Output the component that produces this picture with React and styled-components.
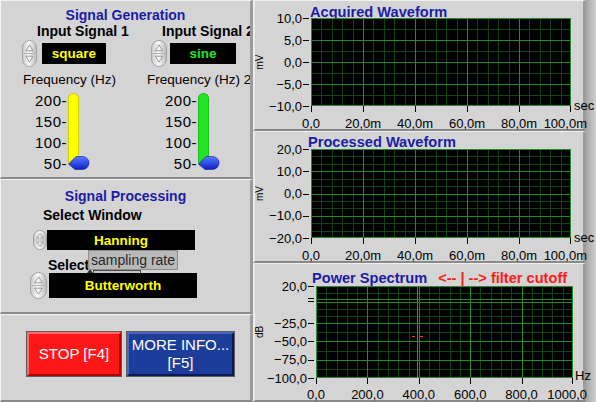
import React from 'react'
import styled, { createGlobalStyle } from 'styled-components'

const FONT = '"Liberation Sans", Arial, sans-serif'
const PANEL = '#d4d4d4'
const TITLE_BLUE = '#1c1ca8'
const MAJOR = '#238a26'
const MINOR = '#0a4412'
const CURSOR = '#ff3a14'

const GlobalStyle = createGlobalStyle`
  html, body {
    margin: 0;
    padding: 0;
    background: ${PANEL};
  }
  body {
    font-family: ${FONT};
  }
`

const Screen = styled.div`
  display: flex;
  width: 596px;
  height: 402px;
  overflow: hidden;
  background: ${PANEL};
  color: #000;
`

/* ---------- left controls ---------- */

const LeftColumn = styled.div`
  display: flex;
  flex-direction: column;
  width: 253px;
  flex-shrink: 0;
`

const Section = styled.div`
  position: relative;
  box-sizing: border-box;
  height: ${p => p.$h}px;
  padding-top: ${p => p.$pt}px;
  border-top: 1px solid #f4f4f4;
  border-left: 1px solid #f4f4f4;
  border-right: 3px solid #9c9c9c;
  border-bottom: 2px solid #8a8a8a;
  overflow: hidden;
`

const SectionTitle = styled.div`
  font-size: 14px;
  font-weight: bold;
  line-height: 16px;
  color: ${TITLE_BLUE};
  text-align: center;
`

const Columns = styled.div`
  display: flex;
`

const Column = styled.div`
  display: flex;
  flex-direction: column;
  align-items: flex-start;
  flex-shrink: 0;
  width: ${p => p.$w}px;
  margin-left: ${p => p.$ml || 0}px;
`

const ControlLabel = styled.div`
  font-size: 14px;
  font-weight: bold;
  line-height: 16px;
  white-space: nowrap;
  margin-left: ${p => p.$ml}px;
  margin-top: ${p => p.$mt || 0}px;
`

const FreqLabel = styled.div`
  font-size: 13.5px;
  line-height: 16px;
  white-space: nowrap;
  margin: 5px 0 0 ${p => p.$ml}px;
`

const Ring = styled.div`
  position: relative;
  z-index: 1;
  display: flex;
  align-items: center;
  gap: ${p => p.$gap}px;
  margin-left: ${p => p.$ml}px;
  margin-top: ${p => p.$mt || 0}px;
`

const Display = styled.div`
  display: flex;
  align-items: center;
  justify-content: center;
  width: ${p => p.$w}px;
  height: ${p => p.$h}px;
  background: #000;
  color: ${p => p.$color || '#ffff00'};
  font-size: 13.5px;
  font-weight: bold;
`

const SliderRow = styled.div`
  display: flex;
  gap: 1px;
  margin-top: 2px;
`

const Scale = styled.div`
  display: flex;
  flex-direction: column;
  align-items: flex-end;
  width: ${p => p.$w}px;
`

const ScaleTick = styled.div`
  height: 21px;
  line-height: 21px;
  font-size: 15px;
  letter-spacing: 0.5px;
`

const Track = styled.div`
  position: relative;
  width: 11px;
  height: 74px;
  margin-top: 3px;
  border-radius: 6px;
  background: ${p => p.$color};
  box-shadow: inset 0 0 0 1px rgba(0, 0, 0, 0.18);
`

const Thumb = styled.svg`
  position: absolute;
  left: 0;
  top: 63px;
  overflow: visible;
`

const Tooltip = styled.div`
  position: absolute;
  left: 87px;
  top: 70px;
  z-index: 2;
  box-sizing: border-box;
  height: 20px;
  padding: 0 2px;
  background: #b9b9b9;
  border: 1px solid #8e8e8e;
  font-size: 14px;
  line-height: 18px;
  color: #2a2a2a;
  white-space: nowrap;
`

const HiddenControl = styled.div`
  position: absolute;
  left: 92px;
  top: 90px;
  width: 48px;
  height: 10px;
  box-sizing: border-box;
  border: 1px solid #4a4a4a;
  background: #c4c4c4;

  &::before {
    content: '';
    position: absolute;
    left: -7px;
    top: -2px;
    border-left: 3px solid transparent;
    border-right: 3px solid transparent;
    border-bottom: 4px solid #333;
  }
`

const ButtonRow = styled.div`
  display: flex;
  gap: 6px;
  margin-left: 26px;
`

const Button = styled.div`
  display: flex;
  align-items: center;
  justify-content: center;
  box-sizing: border-box;
  width: ${p => p.$w}px;
  height: 44px;
  background: ${p => p.$bg};
  border: 2px solid;
  border-color: ${p => p.$light} ${p => p.$dark} ${p => p.$dark} ${p => p.$light};
  box-shadow: 0 0 0 1px #5e5e5e;
  color: #fff;
  font-size: 15px;
  line-height: 18px;
  text-align: center;
`

/* ---------- right graphs ---------- */

const RightColumn = styled.div`
  position: relative;
  z-index: 1;
  display: flex;
  flex-direction: column;
  width: 333px;
  flex-shrink: 0;
`

const GraphPanel = styled.div`
  display: flex;
  flex-direction: column;
  box-sizing: border-box;
  height: ${p => p.$h}px;
  border-top: 1px solid #f0f0f0;
  border-left: 2px solid #ececec;
  border-right: 3px solid #9c9c9c;
  border-bottom: 2px solid #8a8a8a;
`

const GraphTitle = styled.div`
  box-sizing: border-box;
  height: ${p => p.$h}px;
  padding: ${p => p.$pt}px 0 0 ${p => p.$pl}px;
  font-size: 14.6px;
  font-weight: bold;
  line-height: 16px;
  color: ${TITLE_BLUE};
  white-space: nowrap;
`

const CutoffHint = styled.span`
  margin-left: 11px;
  color: #ff1a1a;
`

const ChartSvg = styled.svg`
  display: block;
  flex-shrink: 0;
  overflow: visible;
  font-family: ${FONT};
`

const Edge = styled.div`
  flex: 1;
  background: linear-gradient(to right, #a6a6a6, #cfcfcf);
`

const Spinner = ({ w, h }) => (
  <svg width={w} height={h} viewBox={`0 0 ${w} ${h}`}>
    <defs>
      <linearGradient id="spinFill" x1="0" x2="1" y1="0" y2="0">
        <stop offset="0" stopColor="#c6c6c6" />
        <stop offset="0.45" stopColor="#fbfbfb" />
        <stop offset="1" stopColor="#b8b8b8" />
      </linearGradient>
    </defs>
    <rect x="0.5" y="0.5" width={w - 1} height={h - 1} rx={w / 2 - 0.5} fill="url(#spinFill)" stroke="#a4a4a4" />
    <line x1="2" x2={w - 2} y1={h / 2} y2={h / 2} stroke="#b4b4b4" />
    <path d={`M${w / 2} ${h * 0.18} L${w * 0.74} ${h * 0.4} H${w * 0.26} Z`} fill="none" stroke="#9a9a9a" />
    <path d={`M${w / 2} ${h * 0.82} L${w * 0.74} ${h * 0.6} H${w * 0.26} Z`} fill="none" stroke="#9a9a9a" />
  </svg>
)

const Slider = ({ scaleWidth, color }) => (
  <SliderRow>
    <Scale $w={scaleWidth}>
      {['200-', '150-', '100-', '50-'].map(t => (
        <ScaleTick key={t}>{t}</ScaleTick>
      ))}
    </Scale>
    <Track $color={color}>
      <Thumb width="21" height="14" viewBox="0 0 21 14">
        <defs>
          <linearGradient id="thumbFill" x1="0" y1="0" x2="0" y2="1">
            <stop offset="0" stopColor="#5c7cff" />
            <stop offset="1" stopColor="#0a1fc4" />
          </linearGradient>
        </defs>
        <path d="M0.5 8 L8 0.5 H14.5 A6.5 6.5 0 0 1 14.5 13.5 H7 Z" fill="url(#thumbFill)" stroke="#0a1a9a" strokeWidth="0.6" />
      </Thumb>
    </Track>
  </SliderRow>
)

const crisp = v => Math.round(v) + 0.5

const Chart = ({ height, plotX, plotW, plotH, yTicks, yMinor, extraMajor = [], xLabels, xBase, yUnit, xUnit, xUnitX, xUnitBase, children }) => {
  const divs = (xLabels.length - 1) * 5
  const clampY = y => Math.min(crisp(y), plotH - 0.5)
  const clampX = x => Math.min(crisp(x), plotX + plotW - 0.5)
  const verticals = []
  for (let i = 0; i <= divs; i++) {
    const x = clampX(plotX + (i * plotW) / divs)
    verticals.push(<line key={`v${i}`} x1={x} x2={x} y1={0} y2={plotH} stroke={i % 5 === 0 ? MAJOR : MINOR} />)
  }
  const majors = [...yTicks.map(t => t[1]), ...extraMajor]
  const last = xLabels.length - 1
  return (
    <ChartSvg width="328" height={height}>
      <rect x={plotX} y={0} width={plotW} height={plotH} fill="#000" />
      {yMinor.map(y => (
        <line key={`m${y}`} x1={plotX} x2={plotX + plotW} y1={clampY(y)} y2={clampY(y)} stroke={MINOR} />
      ))}
      {verticals}
      {majors.map(y => (
        <line key={`M${y}`} x1={plotX} x2={plotX + plotW} y1={clampY(y)} y2={clampY(y)} stroke={MAJOR} />
      ))}
      {yTicks.map(([label, y]) => (
        <g key={label}>
          <text x={plotX - 9} y={y + 4.5} textAnchor="end" fontSize="13">{label}</text>
          <line x1={plotX - 8} x2={plotX - 2} y1={crisp(y)} y2={crisp(y)} stroke="#000" />
        </g>
      ))}
      {xLabels.map((label, i) => {
        const x = plotX + (i * plotW) / last
        return (
          <g key={label}>
            <line x1={clampX(x)} x2={clampX(x)} y1={plotH} y2={plotH + 6} stroke="#000" />
            <text x={i === last ? 332 : x} y={xBase} textAnchor={i === last ? 'end' : 'middle'} fontSize="13">{label}</text>
          </g>
        )
      })}
      <text transform={`translate(8 ${plotH / 2}) rotate(-90)`} textAnchor="middle" fontSize="10">{yUnit}</text>
      <text x={xUnitX} y={xUnitBase} fontSize="13">{xUnit}</text>
      {children}
    </ChartSvg>
  )
}

const between = (ticks, n) => {
  const out = []
  for (let i = 0; i < ticks.length - 1; i++) {
    const a = ticks[i][1]
    const b = ticks[i + 1][1]
    for (let k = 1; k <= n; k++) out.push(a + ((b - a) * k) / (n + 1))
  }
  return out
}

const timeLabels = ['0,0', '20,0m', '40,0m', '60,0m', '80,0m', '100,0m']

const acquiredTicks = [['10,0', 0], ['5,0', 22], ['0,0', 44], ['\u22125,0', 66], ['\u221210,0', 88]]
const processedTicks = [['20,0', 0], ['10,0', 22.25], ['0,0', 44.5], ['\u221210,0', 66.75], ['\u221220,0', 89]]
const spectrumTicks = [['20,0', 0], ['\u221225,0', 37], ['\u221250,0', 55.3], ['\u221275,0', 73.7], ['\u2212100,0', 92]]

const App = () => (
  <Screen>
    <GlobalStyle />
    <LeftColumn>
      <Section $h={179} $pt={6}>
        <SectionTitle>Signal Generation</SectionTitle>
        <Columns>
          <Column $w={125} $ml={21}>
            <ControlLabel $ml={15}>Input Signal 1</ControlLabel>
            <Ring $ml={0} $mt={1} $gap={5}>
              <Spinner w={15} h={27} />
              <Display $w={64} $h={21} $color="#ffff00">square</Display>
            </Ring>
            <FreqLabel $ml={1}>Frequency (Hz)</FreqLabel>
            <Slider scaleWidth={45} color="#ffff00" />
          </Column>
          <Column $w={200}>
            <ControlLabel $ml={15}>Input Signal 2</ControlLabel>
            <Ring $ml={4} $mt={1} $gap={3}>
              <Spinner w={16} h={27} />
              <Display $w={66} $h={21} $color="#22e622">sine</Display>
            </Ring>
            <FreqLabel $ml={0}>Frequency (Hz) 2</FreqLabel>
            <Slider scaleWidth={50} color="#22e622" />
          </Column>
        </Columns>
      </Section>

      <Section $h={135} $pt={8}>
        <SectionTitle>Signal Processing</SectionTitle>
        <ControlLabel $ml={42} $mt={3}>Select Window</ControlLabel>
        <Ring $ml={32} $mt={7} $gap={0}>
          <Spinner w={14} h={20} />
          <Display $w={148} $h={20}>Hanning</Display>
        </Ring>
        <ControlLabel $ml={47} $mt={7}>Select Filter</ControlLabel>
        <Ring $ml={29} $mt={-1} $gap={2}>
          <Spinner w={17} h={27} />
          <Display $w={148} $h={25}>Butterworth</Display>
        </Ring>
        <HiddenControl />
        <Tooltip>sampling rate</Tooltip>
      </Section>

      <Section $h={88} $pt={17}>
        <ButtonRow>
          <Button $w={94} $bg="#ff1616" $light="#ff6a6a" $dark="#b00000">STOP [F4]</Button>
          <Button $w={107} $bg="#1d3d9b" $light="#4a66c0" $dark="#0a1a55">
            MORE INFO...
            <br />
            [F5]
          </Button>
        </ButtonRow>
      </Section>
    </LeftColumn>

    <RightColumn>
      <GraphPanel $h={131}>
        <GraphTitle $h={17} $pt={3} $pl={55}>Acquired Waveform</GraphTitle>
        <Chart
          height={111}
          plotX={56}
          plotW={260}
          plotH={88}
          yTicks={acquiredTicks}
          yMinor={between(acquiredTicks, 1)}
          xLabels={timeLabels}
          xBase={110}
          yUnit="mV"
          xUnit="sec"
          xUnitX={319}
          xUnitBase={92}
        />
      </GraphPanel>

      <GraphPanel $h={132}>
        <GraphTitle $h={17} $pt={2} $pl={53}>Processed Waveform</GraphTitle>
        <Chart
          height={112}
          plotX={56}
          plotW={260}
          plotH={89}
          yTicks={processedTicks}
          yMinor={between(processedTicks, 2)}
          xLabels={timeLabels}
          xBase={111}
          yUnit="mV"
          xUnit="sec"
          xUnitX={319}
          xUnitBase={93}
        />
      </GraphPanel>

      <GraphPanel $h={139}>
        <GraphTitle $h={22} $pt={6} $pl={57}>
          Power Spectrum
          <CutoffHint>{'<-- | --> filter cutoff'}</CutoffHint>
        </GraphTitle>
        <Chart
          height={114}
          plotX={61}
          plotW={257}
          plotH={92}
          yTicks={spectrumTicks}
          yMinor={[6.5, 23, 30, 46, 64.5, 83]}
          extraMajor={[12.5, 15.5]}
          xLabels={['0,0', '200,0', '400,0', '600,0', '800,0', '1000,0']}
          xBase={112.5}
          yUnit="dB"
          xUnit="Hz"
          xUnitX={320}
          xUnitBase={94}
        >
          <line x1={53} x2={59} y1={12.5} y2={12.5} stroke="#000" />
          <line x1={53} x2={59} y1={15.5} y2={15.5} stroke="#000" />
          <line x1={162.5} x2={162.5} y1={0} y2={92} stroke={CURSOR} />
          <line x1={157} x2={160} y1={50.5} y2={50.5} stroke={CURSOR} />
          <line x1={165} x2={168} y1={50.5} y2={50.5} stroke={CURSOR} />
        </Chart>
      </GraphPanel>
    </RightColumn>
    <Edge />
  </Screen>
)

export default App
